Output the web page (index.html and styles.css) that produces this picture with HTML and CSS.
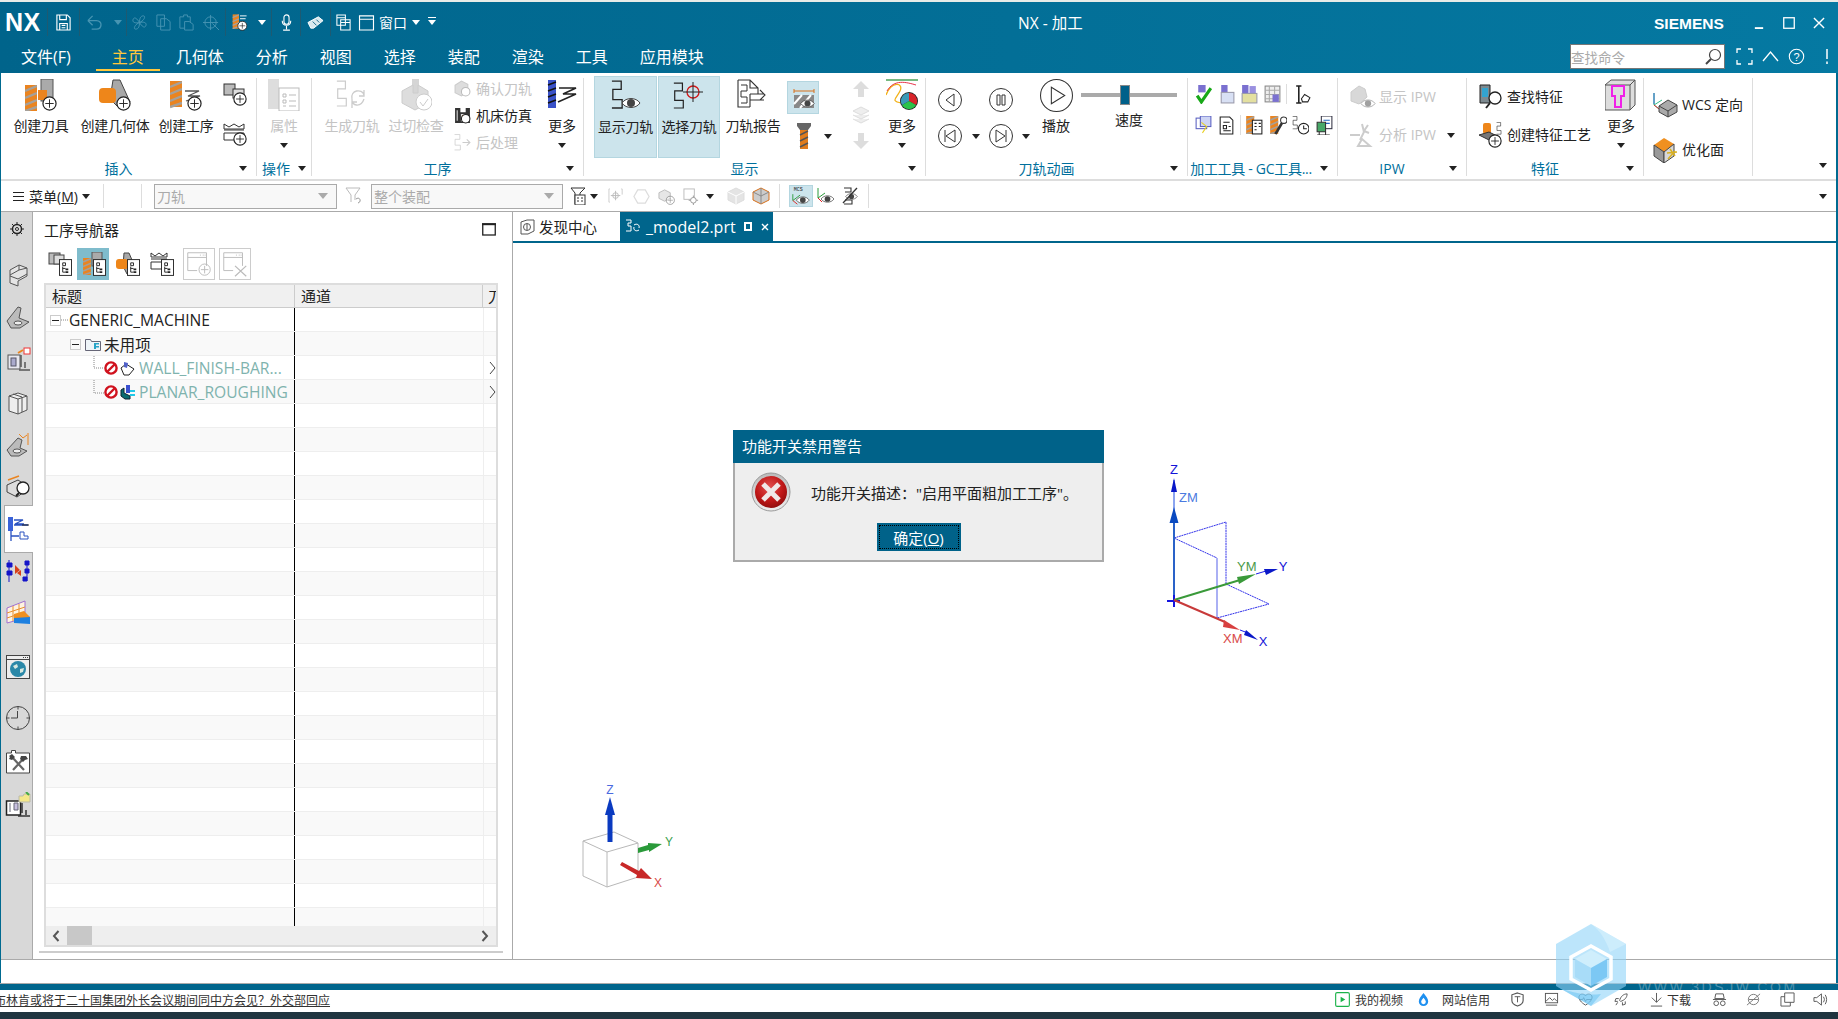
FILE: index.html
```html
<!DOCTYPE html>
<html lang="zh-CN">
<head>
<meta charset="utf-8">
<title>NX - 加工</title>
<link rel="stylesheet" href="styles.css">
</head>
<body>
<svg class="defs" aria-hidden="true">
  <defs>
    <radialGradient id="errRed" cx="45%" cy="35%" r="70%"><stop offset="0" stop-color="#e25050"/><stop offset=".6" stop-color="#c01818"/><stop offset="1" stop-color="#8a0c0c"/></radialGradient>
    <linearGradient id="silver" x1="0" y1="0" x2="0" y2="1"><stop offset="0" stop-color="#bbb"/><stop offset="1" stop-color="#eee"/></linearGradient>
  </defs>
  <symbol id="mill" viewBox="0 0 12 26"><rect width="12" height="26" fill="#ea8420"/><path d="M0 6 12 1M0 13 12 8M0 20 12 15M0 26 12 22" stroke="#a5a09a" stroke-width="2.4"/></symbol>
  <symbol id="plus" viewBox="0 0 16 16"><circle cx="8" cy="8" r="7" fill="#fff" stroke="#222" stroke-width="1.3"/><path d="M8 3.5v9M3.5 8h9" stroke="#222" fill="none"/></symbol>
  <symbol id="path" viewBox="0 0 14 32"><path d="M1 1h10v9H2v11h10v9H1" fill="none" stroke="currentColor" stroke-width="1.4"/></symbol>
  <symbol id="eye" viewBox="0 0 20 14"><path d="M1 7C5 1 15 1 19 7 15 13 5 13 1 7Z" fill="#fff" stroke="#444"/><circle cx="10" cy="7" r="4" fill="#444"/></symbol>
  <symbol id="treeb" viewBox="0 0 14 18"><rect x=".5" y=".5" width="13" height="17" fill="#fff" stroke="#222"/><path d="M4 4h3v3H4zM4 8v6M4 10h3M4 14h3" fill="none" stroke="#222"/><path d="M7 10h3v2H7zM7 13h3v2H7z" fill="#222"/></symbol>
  <symbol id="nosign" viewBox="0 0 14 14"><circle cx="7" cy="7" r="5.6" fill="#fff" stroke="#d0121e" stroke-width="2.4"/><path d="M3 11 11 3" stroke="#d0121e" stroke-width="2.4"/></symbol>
</svg>

<div class="app">
  <div class="topstrip"></div>
  <header class="titlebar">
    <div class="title-row">
      <div class="qat">
        <span class="nx">NX</span><i class="qsep"></i>
        <svg class="qi" viewBox="0 0 16 18"><path d="M1 1h11l3 3v13H1zM4 1v5h7V1M4 17v-7h8v7M6 12h4M6 14.500h4" fill="none" stroke="#fff" stroke-width="1.2"/></svg><i class="qsep"></i>
        <svg class="qi" viewBox="0 0 18 18"><path d="M2 7h9c7 0 6 9 0 9H6M2 7l5-5M2 7l5 5" fill="none" stroke="#4694b2" stroke-width="1.4"/></svg><i class="qcaret off"></i><i class="qsep"></i>
        <svg class="qi" viewBox="0 0 18 18"><path d="M9 9C4 1 2 5 2 7s3 3 7 2c5 8 7 4 7 2s-3-3-7-2Zm0 0c-5 2-7 7-4 7s4-3 4-7Zm0 0c5-2 7-7 4-7s-4 3-4 7Z" fill="none" stroke="#4694b2"/></svg>
        <svg class="qi" viewBox="0 0 16 18"><path d="M1 1h8v12H1zM5 5h6l4 3v9H5z" fill="none" stroke="#4694b2"/></svg>
        <svg class="qi" viewBox="0 0 16 18"><path d="M1 3h4V1h4v2h3v6M1 3v12h5M6 8h5l4 3v6H6z" fill="none" stroke="#4694b2"/></svg>
        <svg class="qi" viewBox="0 0 18 18"><circle cx="8" cy="9" r="6" fill="none" stroke="#4694b2"/><path d="M8 1v16M0 9h16M10 10l7 7" fill="none" stroke="#4694b2"/></svg><i class="qsep"></i>
        <svg class="qi" viewBox="0 0 17 18"><use href="#mill" x="1" y="0" width="7" height="16"/><path d="M9 2h7M9 5h6" stroke="#fff"/><use href="#plus" x="6" y="7" width="11" height="11"/></svg><i class="qcaret"></i><i class="qsep"></i>
        <svg class="qi" viewBox="0 0 12 20"><rect x="3" y="1" width="6" height="11" rx="3" fill="none" stroke="#fff" stroke-width="1.3"/><path d="M1 8c0 7 10 7 10 0M6 14v4M2 19h8" fill="none" stroke="#fff" stroke-width="1.3"/></svg><i class="qsep"></i>
        <svg class="qi" viewBox="0 0 18 14"><path d="M1 7 12 1l5 4-10 8H4z" fill="#d8e8ee" stroke="#fff"/><path d="M6 6l4 4M10 4l3 3" stroke="#1a6a8a"/></svg><i class="qsep"></i>
        <svg class="qi" viewBox="0 0 16 18"><path d="M1 1h9v11H1zM1 4h9M5 6h10v11H5zM5 9h10" fill="none" stroke="#fff" stroke-width="1.1"/></svg>
        <svg class="qi" viewBox="0 0 16 18"><path d="M.6 2h14.800v15H.6zM.6 5.500h14.800" fill="none" stroke="#fff" stroke-width="1.2"/></svg>
        <span class="qtext">窗口</span><i class="qcaret"></i><i class="qcaret lined"></i>
      </div>
      <div class="wintitle">NX - 加工</div>
      <div class="siemens">SIEMENS</div>
      <div class="winbtns">
        <svg class="wb" viewBox="0 0 13 13"><path d="M2 12h9" stroke="#fff" stroke-width="2"/></svg>
        <svg class="wb" viewBox="0 0 13 13"><rect x=".8" y=".8" width="11.400" height="11.400" fill="none" stroke="#fff" stroke-width="1.4"/></svg>
        <svg class="wb" viewBox="0 0 13 13"><path d="M1 1l11 11M12 1 1 12" stroke="#fff" stroke-width="1.5"/></svg>
      </div>
    </div>
    <div class="menu-row">
      <nav class="menu">
        <a class="m-file">文件(F)</a><a class="active">主页</a><a>几何体</a><a>分析</a><a>视图</a><a>选择</a><a>装配</a><a>渲染</a><a>工具</a><a>应用模块</a>
      </nav>
      <div class="search"><span>查找命令</span><svg viewBox="0 0 18 18"><circle cx="11" cy="7" r="5.500" fill="none" stroke="#444" stroke-width="1.200"/><path d="M7 11 2 16" stroke="#444" stroke-width="2"/></svg></div>
      <div class="menu-tools">
        <svg viewBox="0 0 17 17"><path d="M1 5V1h4M12 1h4v4M16 12v4h-4M5 16H1v-4" fill="none" stroke="#fff" stroke-width="1.300"/></svg>
        <svg viewBox="0 0 17 17"><path d="M1 13 8.500 4 16 13" fill="none" stroke="#fff" stroke-width="1.300"/></svg>
        <svg viewBox="0 0 17 17"><circle cx="8.500" cy="8.500" r="7.200" fill="none" stroke="#fff" stroke-width="1.100"/><text x="8.500" y="12.500" class="svgq">?</text></svg>
        <svg class="excl" viewBox="0 0 6 17"><path d="M3 1v10M3 13.500v2.500" stroke="#fff" stroke-width="1.500"/></svg>
      </div>
    </div>
  </header>

  <div class="work">
    <section class="ribbon">
      <div class="grp g1">
        <div class="gbody">
          <div class="big w62">
            <svg class="ico32" viewBox="0 0 32 32"><use href="#mill" x="0" y="6" width="12" height="26"/><rect x="16" y="0" width="12" height="22" fill="#aaa" stroke="#555"/><rect x="13" y="11" width="9" height="10" fill="#ea8420"/><use href="#plus" x="17" y="17" width="15" height="15"/></svg>
            <span>创建刀具</span>
          </div>
          <div class="big w86">
            <svg class="ico32" viewBox="0 0 32 32"><path d="M14 1h7l10 22-10 7L11 20z" fill="#a8a8a8" stroke="#444"/><rect x="0" y="9" width="17" height="15" rx="4" fill="#ee861a"/><use href="#plus" x="17" y="17" width="15" height="15"/></svg>
            <span>创建几何体</span>
          </div>
          <div class="big w56">
            <svg class="ico32" viewBox="0 0 32 32"><use href="#mill" x="0" y="0" width="12" height="30"/><path d="M15 12h14L18 17h12L16 22" fill="none" stroke="#555" stroke-width="1.300"/><use href="#plus" x="17" y="17" width="15" height="15"/></svg>
            <span>创建工序</span>
          </div>
          <div class="smallcol w42">
            <svg class="ico24" viewBox="0 0 24 24"><rect x="1" y="2" width="11" height="11" fill="#bbb" stroke="#333"/><rect x="10" y="7" width="11" height="9" fill="#ddd" stroke="#333"/><use href="#plus" x="10" y="10" width="14" height="14"/></svg>
            <svg class="ico24" viewBox="0 0 24 24"><path d="M1 2l5 3 5-3 5 3 5-3v5H1zM1 8h20M1 11h20v7H1z" fill="#fff" stroke="#333"/><use href="#plus" x="10" y="10" width="14" height="14"/></svg>
          </div>
        </div>
        <div class="glabel"><span>插入</span><i class="caret"></i></div>
      </div>

      <div class="grp g2">
        <div class="gbody">
          <div class="big w54 off">
            <svg class="ico32" viewBox="0 0 32 32"><rect x="0" y="0" width="11" height="30" fill="#ddd"/><rect x="11" y="9" width="20" height="23" fill="#fff" stroke="#bbb"/><path d="M15 15h3v3h-3zM21 16h7M15 21h3v3h-3zM21 22h7M15 27h3M21 27h7" fill="none" stroke="#bbb"/></svg>
            <span>属性</span><i class="caret"></i>
          </div>
        </div>
        <div class="glabel"><span>操作</span><i class="caret"></i></div>
      </div>

      <div class="grp g3">
        <div class="gbody">
          <div class="big w56 off ml12">
            <svg class="ico32" viewBox="0 0 32 32"><g color="#ccc"><use href="#path" x="0" y="0" width="12" height="30"/></g><path d="M16 20c-2-9 10-11 12-4M28 20c-3 9-13 7-12 0M28 11v6h-5M16 29v-6h5" fill="none" stroke="#ccc" stroke-width="1.300"/></svg>
            <span>生成刀轨</span>
          </div>
          <div class="big w56 off ml8">
            <svg class="ico32" viewBox="0 0 32 32"><rect x="12" y="0" width="7" height="18" fill="#d5d5d5"/><path d="M2 12 13 6v8h5V6l10 6v12l-13 7-13-7z" fill="#ddd" stroke="#ccc"/><circle cx="24" cy="23" r="8" fill="#fff" stroke="#ccc"/><path d="M20 23l3 4 5-7" fill="none" stroke="#ccc"/></svg>
            <span>过切检查</span>
          </div>
          <div class="rows ml10 r27">
            <div class="row off"><svg class="ico16" viewBox="0 0 16 16"><path d="M1 5l6-4 6 3v7l-6 4-6-3z" fill="#ddd" stroke="#ccc"/><circle cx="11" cy="11" r="4" fill="#fff" stroke="#bbb"/></svg><span>确认刀轨</span></div>
            <div class="row"><svg class="ico16" viewBox="0 0 16 16"><path d="M1 1h5v4h5V1h4v14H1z" fill="#333"/><path d="M3 3v10M7 7h4v6H7z" stroke="#ddd" fill="#ea8420"/><circle cx="11" cy="11" r="4" fill="#fff" stroke="#222"/></svg><span>机床仿真</span></div>
            <div class="row off"><svg class="ico16" viewBox="0 0 16 16"><g color="#ccc"><use href="#path" x="0" y="0" width="7" height="16"/></g><path d="M8 8h7m-3-3 3 3-3 3" fill="none" stroke="#ccc"/></svg><span>后处理</span></div>
          </div>
          <div class="big w48 ml6">
            <svg class="ico32" viewBox="0 0 32 32"><rect x="2" y="1" width="8" height="28" fill="#3a52c8"/><path d="M2 6l8-3M2 12l8-3M2 18l8-3M2 24l8-3" stroke="#111" stroke-width="1.500"/><path d="M13 9h17L17 15h13L12 23" fill="none" stroke="#222" stroke-width="1.500"/></svg>
            <span>更多</span><i class="caret"></i>
          </div>
        </div>
        <div class="glabel"><span>工序</span><i class="caret"></i></div>
      </div>

      <div class="grp g4">
        <div class="gbody">
          <div class="big toggle ml10">
            <svg class="ico32" viewBox="0 0 32 32"><g color="#222"><use href="#path" x="1" y="0" width="13" height="30"/></g><use href="#eye" x="11" y="16" width="20" height="14"/></svg>
            <span>显示刀轨</span>
          </div>
          <div class="big toggle ml1">
            <svg class="ico32" viewBox="0 0 32 32"><g color="#222"><use href="#path" x="0" y="2" width="12" height="28"/></g><circle cx="20" cy="12" r="6" fill="none" stroke="#d01818" stroke-width="1.300"/><path d="M20 2v20M10 12h20" stroke="#222"/></svg>
            <span>选择刀轨</span>
          </div>
          <div class="big w60 ml3">
            <svg class="ico32" viewBox="0 0 32 32"><path d="M1 1h12l8 8v6M13 1v8h8M1 1v27h12M13 15h14m-4-4 5 5-5 5M13 21h14M13 15v13" fill="none" stroke="#333" stroke-width="1.100"/><path d="M4 6h6v6H4v6h6v6H4" fill="none" stroke="#333"/></svg>
            <span>刀轨报告</span>
          </div>
          <div class="dcol ml4">
            <div class="dtop"><svg class="ico24" viewBox="0 0 24 24"><path d="M2 5h20M2 3v4M22 3v4" stroke="#d8701a" fill="none"/><rect x="2" y="9" width="20" height="13" fill="#888"/><path d="M2 18 10 9M8 22 19 9" stroke="#fff" stroke-width="2"/><g transform="translate(8 12)"><use href="#eye" width="15" height="11"/></g></svg></div>
            <div class="dbot"><svg class="ico26" viewBox="0 0 16 28"><path d="M1 1h14v3l-3 4H4L1 4z" fill="#666"/><rect x="4" y="8" width="8" height="19" fill="#e07c1c"/><path d="M4 13l8-4M4 19l8-4M4 25l8-4" stroke="#555" stroke-width="1.500"/></svg><i class="caret"></i></div>
          </div>
          <div class="arrows ml22">
            <svg viewBox="0 0 18 18"><path d="M9 1 17 9h-5v8H6V9H1z" fill="#ddd"/></svg>
            <svg viewBox="0 0 18 18"><path d="M1 5 9 1l8 4-8 4zM1 9l8 4 8-4M1 13l8 4 8-4" fill="#eee" stroke="#ddd"/></svg>
            <svg viewBox="0 0 18 18"><path d="M9 17 1 9h5V1h6v8h5z" fill="#ddd"/></svg>
          </div>
          <div class="big w46 ml7">
            <svg class="ico32" viewBox="0 0 32 32"><path d="M0 1h32" stroke="#1a8a2a" stroke-width="1.200"/><path d="M0 16C6 1 18 4 14 12S4 22 16 24" fill="none" stroke="#f2b21a" stroke-width="1.300"/><path d="M1 12C8 0 20 3 30 6" fill="none" stroke="#e8344a"/><circle cx="23" cy="22" r="9" fill="#222"/><path d="M23 22V14a8 8 0 0 1 7 12z" fill="#d8242a"/><path d="M23 22l7 4a8 8 0 0 1-14 0z" fill="#2ac24a"/><path d="M23 22l-7 4a8 8 0 0 1 7-12z" fill="#3a9ab8"/></svg>
            <span>更多</span><i class="caret"></i>
          </div>
        </div>
        <div class="glabel"><span>显示</span><i class="caret"></i></div>
      </div>

      <div class="grp g5">
        <div class="gbody anim">
          <svg class="circ a1" viewBox="0 0 24 24"><circle cx="12" cy="12" r="11.500" fill="none" stroke="#333"/><path d="M16 6v12L8 12z" fill="none" stroke="#333"/></svg>
          <svg class="circ a2" viewBox="0 0 24 24"><circle cx="12" cy="12" r="11.500" fill="none" stroke="#333"/><path d="M8 7h3v10H8zM13 7h3v10h-3z" fill="none" stroke="#333"/></svg>
          <div class="play">
            <svg viewBox="0 0 32 32"><circle cx="16" cy="16" r="15.500" fill="none" stroke="#333"/><path d="M11 8v16l13-8z" fill="none" stroke="#333"/></svg>
            <span>播放</span>
          </div>
          <div class="speed">
            <div class="slider"><b></b></div>
            <span>速度</span>
          </div>
          <svg class="circ a3" viewBox="0 0 24 24"><circle cx="12" cy="12" r="11.500" fill="none" stroke="#333"/><path d="M7 6v12M17 6v12L8 12z" fill="none" stroke="#333"/></svg>
          <i class="caret k1"></i>
          <svg class="circ a4" viewBox="0 0 24 24"><circle cx="12" cy="12" r="11.500" fill="none" stroke="#333"/><path d="M17 6v12M7 6v12l9-6z" fill="none" stroke="#333"/></svg>
          <i class="caret k2"></i>
        </div>
        <div class="glabel"><span>刀轨动画</span><i class="caret"></i></div>
      </div>

      <div class="grp g6">
        <div class="gbody gc">
          <div class="gcrow a">
            <svg viewBox="0 0 16 18"><rect x="3" y="0" width="7" height="7" fill="#7a70d0"/><path d="M2 10l4 6 9-13" fill="none" stroke="#18a818" stroke-width="3"/></svg>
            <svg viewBox="0 0 16 18"><rect x="3" y="0" width="6" height="7" fill="#7a70d0"/><rect x="3" y="7" width="12" height="10" fill="#d8e0f4" stroke="#99a"/></svg>
            <svg viewBox="0 0 16 18"><rect x="1" y="0" width="6" height="8" fill="#7a70d0"/><rect x="8" y="1" width="6" height="8" fill="#9a90e0"/><rect x="1" y="8" width="14" height="9" fill="#e4e0a0" stroke="#99a"/></svg>
            <svg viewBox="0 0 16 18"><rect x="1" y="1" width="14" height="15" fill="#eee" stroke="#888"/><path d="M1 5h14M1 9h14M1 13h14M5 1v15M10 1v15" stroke="#aaa"/><rect x="8" y="9" width="6" height="7" fill="#7a70d0"/></svg>
            <i class="vsep"></i>
            <svg viewBox="0 0 16 18"><path d="M2 1h5M2 17h5M4.500 1v16" stroke="#222" stroke-width="1.500" fill="none"/><path d="M7 13l3-4 5 3-2 4H8z" fill="none" stroke="#222"/></svg>
          </div>
          <div class="gcrow b">
            <svg viewBox="0 0 16 18"><rect x="1" y="2" width="10" height="10" fill="#fff" stroke="#5a60c0"/><rect x="5" y="0" width="10" height="10" fill="#cdd4f4" stroke="#5a60c0"/><path d="M6 6l5 4-4 6" stroke="#e8d020" fill="none"/></svg>
            <svg viewBox="0 0 16 18"><path d="M2 1h9l3 3v13H2z" fill="#fff" stroke="#222"/><path d="M5 6h6M5 9h3v3H5zM10 10h2M5 14h7" stroke="#222" fill="none"/></svg>
            <i class="vsep"></i>
            <svg viewBox="0 0 16 18"><use href="#mill" width="8" height="17"/><rect x="6" y="4" width="9" height="13" fill="#fff" stroke="#222"/><path d="M8 7h2M12 7h2M8 10h2M12 10h2M8 13h2" stroke="#222"/></svg>
            <svg viewBox="0 0 16 18"><use href="#mill" width="8" height="17"/><path d="M14 2 7 14l-2 3" stroke="#333" stroke-width="2.500" fill="none"/><circle cx="13" cy="4" r="3" fill="#fff" stroke="#333"/></svg>
            <svg viewBox="0 0 16 18"><g color="#222"><use href="#path" width="6" height="13"/></g><circle cx="11" cy="12" r="5" fill="#fff" stroke="#222"/><path d="M11 9v3h3" stroke="#222" fill="none"/></svg>
            <svg viewBox="0 0 16 18"><rect x="5" y="0" width="10" height="12" fill="#fff" stroke="#334"/><path d="M7 4h6M7 7h6" stroke="#2266c0"/><path d="M1 6h8v9H1z" fill="#48a868" stroke="#333"/><path d="M3 15v3M9 15v3M1 18h12" stroke="#333"/></svg>
          </div>
        </div>
        <div class="glabel"><span class="gclabel">加工工具 - GC工具...</span><i class="caret"></i></div>
      </div>

      <div class="grp g7">
        <div class="gbody ipw">
          <div class="row off"><svg class="ico26" viewBox="0 0 26 26"><path d="M1 8l8-6 6 3 2 8-8 7-8-3z" fill="#d8d8d8" stroke="#ccc"/><use href="#eye" x="10" y="14" width="16" height="11" opacity=".5"/></svg><span>显示 IPW</span></div>
          <div class="row off"><svg class="ico26" viewBox="0 0 26 26"><path d="M0 13h10M12 2l2 8-4 8M8 24l4-7 8 7zM18 3l-4 6 5 2" fill="none" stroke="#ccc" stroke-width="2"/></svg><span>分析 IPW</span><i class="caret"></i></div>
        </div>
        <div class="glabel"><span>IPW</span><i class="caret"></i></div>
      </div>

      <div class="grp g8">
        <div class="gbody fea">
          <div class="rows ft">
            <div class="row"><svg class="ico26" viewBox="0 0 26 26"><path d="M2 1h10v18H2z" fill="#7d8a90" stroke="#222"/><path d="M4 4h6v9H4z" fill="#32a4d0"/><circle cx="17" cy="14" r="6" fill="#fff" stroke="#222" stroke-width="1.300"/><path d="M12 19l-4 5" stroke="#222" stroke-width="2"/></svg><span>查找特征</span></div>
            <div class="row"><svg class="ico26" viewBox="0 0 26 26"><rect x="5" y="1" width="8" height="11" rx="2" fill="#ee861a"/><path d="M1 13l10-3 8 4-8 4z" fill="#777" stroke="#333"/><g color="#222"><use href="#path" x="18" y="0" width="6" height="13"/></g><use href="#plus" x="10" y="12" width="14" height="14"/></svg><span>创建特征工艺</span></div>
          </div>
          <div class="big w40 ml4">
            <svg class="ico32" viewBox="0 0 32 32"><path d="M0 6 6 1h24v25l-5 5H0z" fill="#ddd" stroke="#555"/><path d="M25 31V6H0M25 6l5-5" fill="none" stroke="#555"/><path d="M7 7h12v10h-3v11H10V17H7z" fill="none" stroke="#f020e8" stroke-width="2"/></svg>
            <span>更多</span><i class="caret"></i>
          </div>
        </div>
        <div class="glabel"><span>特征</span><i class="caret"></i></div>
      </div>

      <div class="grp g9">
        <div class="gbody wcs">
          <div class="row"><svg class="ico26" viewBox="0 0 26 26"><path d="M1 1v12M1 13 9 8M1 13l9 7" stroke="#3b8" fill="none"/><path d="M1 1v11" stroke="#36c"/><path d="M1 13l9 7" stroke="#d33"/><path d="M6 14l9-6 9 5v7l-9 5-9-5z" fill="#aaa" stroke="#444"/><path d="M6 14l9 5 9-6M15 19v6" fill="none" stroke="#444"/></svg><span>WCS 定向</span></div>
          <div class="row"><svg class="ico26" viewBox="0 0 26 26"><path d="M1 8l10-7 10 6-10 8z" fill="#f09020"/><path d="M1 8v11l10 7V15z" fill="#999" stroke="#444"/><path d="M11 15v11l10-7V7z" fill="#d8d8d8" stroke="#444"/><path d="M15 22l7-8M17 12l5 7M14 16l10-1" stroke="#d8b020" stroke-width="1.500"/></svg><span>优化面</span></div>
        </div>
      </div>
      <div class="ribbon-end"><i class="caret"></i></div>
    </section>

    <section class="toolbar">
      <div class="t-menu"><svg viewBox="0 0 11 11"><path d="M0 1.500h11M0 5.500h11M0 9.500h11" stroke="#222"/></svg><span>菜单(<u>M</u>)</span><i class="caret"></i></div>
      <i class="tsep s1"></i><i class="tsep s2"></i>
      <div class="combo c-a"><span>刀轨</span><i class="caret"></i></div>
      <svg class="tf f1" viewBox="0 0 18 18"><path d="M1 1h14l-5 7v5M1 1l5 7v7" fill="none" stroke="#bbb"/><path d="M11 12c4-3 6 3 2 4" fill="none" stroke="#999"/></svg>
      <div class="combo c-b"><span>整个装配</span><i class="caret"></i></div>
      <svg class="tf f2" viewBox="0 0 18 18"><path d="M1 1h14l-5 5v3M1 1l4 5v11" fill="none" stroke="#333"/><rect x="5" y="8" width="10" height="10" fill="#fff" stroke="#333"/><path d="M7 11h2M11 11h2M7 14h2M11 14h2" stroke="#333"/></svg>
      <i class="caret k-a"></i>
      <div class="t-off">
        <svg viewBox="0 0 18 18"><path d="M2 1H1v14h1M14 1h1v6" fill="none" stroke="#ccc"/><path d="M8 3v10M3 8h10" stroke="#bbb"/><circle cx="8" cy="8" r="3" fill="none" stroke="#bbb"/></svg>
        <svg viewBox="0 0 18 18"><path d="M5 2h8l4 7-4 7H5L1 9z" fill="none" stroke="#ddd" stroke-width="1.300"/></svg>
        <svg viewBox="0 0 18 18"><path d="M1 5l6-3 6 3v6l-6 3-6-3z" fill="#e6e6e6" stroke="#bbb"/><use href="#plus" x="8" y="8" width="10" height="10" opacity=".5"/></svg>
        <svg viewBox="0 0 18 18"><rect x="1" y="1" width="11" height="11" fill="none" stroke="#bbb"/><path d="M11 8v10M6 13h10" stroke="#999"/><circle cx="11" cy="13" r="3" fill="#fff" stroke="#999"/></svg>
      </div>
      <i class="caret k-b"></i>
      <svg class="tc c-1" viewBox="0 0 18 18"><path d="M1 5l8-4 8 4v8l-8 4-8-4z" fill="#e4e4e4" stroke="#ddd"/><path d="M1 5l8 4 8-4M9 9v8" fill="none" stroke="#fff"/></svg>
      <svg class="tc c-2" viewBox="0 0 18 18"><path d="M1 5l8-4 8 4v8l-8 4-8-4z" fill="#ccc" stroke="#d8701a"/><path d="M9 1v16M1 5l8 4 8-4" fill="none" stroke="#888"/></svg>
      <i class="tsep s3"></i>
      <div class="t-mcs"><svg viewBox="0 0 22 22"><text x="3" y="6" class="svgm">MCS</text><path d="M2 9v7M2 16l8-6" stroke="#2a9a3a" fill="none"/><path d="M2 16l5 4" stroke="#d22"/><use href="#eye" x="5" y="10" width="16" height="11"/></svg></div>
      <svg class="tc c-3" viewBox="0 0 18 18"><path d="M1 1v10M1 11l7-5" stroke="#2a9a3a" fill="none"/><path d="M1 11l4 4" stroke="#d22"/><use href="#eye" x="3" y="7" width="15" height="10"/></svg>
      <svg class="tc c-4" viewBox="0 0 18 18"><path d="M3 1h7v4H4M4 13h7v4H3" fill="none" stroke="#333" stroke-width="1.100"/><use href="#eye" x="4" y="5" width="13" height="9"/><path d="M2 16 16 1" stroke="#333" stroke-width="1.300"/></svg>
      <i class="tsep s4"></i>
      <i class="caret k-end"></i>
    </section>

    <section class="main">
      <aside class="rail">
        <svg class="r-gear" viewBox="0 0 14 14"><circle cx="7" cy="7" r="4.500" fill="none" stroke="#222" stroke-width="1.500"/><circle cx="7" cy="7" r="1.500" fill="#eee" stroke="#222"/><path d="M7 0v2.500M7 11.500V14M0 7h2.500M11.500 7H14M2 2l2 2M10 10l2 2M12 2l-2 2M4 10l-2 2" stroke="#222"/></svg>
        <svg viewBox="0 0 26 26"><path d="M5 8 14 3l8 3v8l-9 5v5l-8-3z" fill="#e5e5e5" stroke="#555"/><path d="M5 14l8 3 9-5M14 8 5 13M14 3v5l8-2" fill="none" stroke="#555"/></svg>
        <svg viewBox="0 0 26 26"><path d="M2 16 13 2l3 1-2 10 10 4-9 6H6z" fill="#bbb" stroke="#555"/><ellipse cx="13" cy="18" rx="4" ry="2" fill="#eee" stroke="#555"/></svg>
        <svg viewBox="0 0 26 26"><rect x="3" y="8" width="12" height="14" fill="#e8e8f0" stroke="#555"/><rect x="6" y="11" width="5" height="8" fill="#aac" stroke="#556"/><path d="M16 8v12M20 15v6M14 23h11" stroke="#555" stroke-width="1.500"/><rect x="19" y="1" width="6" height="6" fill="#fff" stroke="#e33"/><path d="M13 6l5-3" stroke="#ea8420" stroke-width="2"/></svg>
        <svg viewBox="0 0 26 26"><path d="M4 7l9-3 9 3v14l-9 4-9-3z" fill="#eee" stroke="#555"/><path d="M4 7l9 3 9-3M13 10v15M8 5l9 3v15" fill="none" stroke="#555"/></svg>
        <svg viewBox="0 0 26 26"><path d="M2 18 13 6l4 2-2 8 7 3-8 5H6z" fill="#bbb" stroke="#555"/><ellipse cx="12" cy="19" rx="4" ry="2" fill="#eee" stroke="#555"/><path d="M14 2l4 4 4-3M23 1v12" stroke="#ea8420" fill="none"/></svg>
        <svg viewBox="0 0 26 26"><path d="M2 12l11-5 6 4v8l-7 5-10-5z" fill="#ddd" stroke="#444"/><path d="M3 7l11-4" stroke="#ea8420" stroke-width="1.500"/><circle cx="18" cy="15" r="6" fill="#fff" stroke="#222" stroke-width="1.300"/><path d="M14 20l-3 3" stroke="#222" stroke-width="2"/></svg>
        <svg class="r-active" viewBox="0 0 26 26"><rect x="3" y="1" width="5" height="14" fill="#3a62d8"/><path d="M9 4h9L10 8h9M9 9h14M6 15v10M6 20h8" fill="none" stroke="#2a52c0" stroke-width="1.300"/><path d="M15 16h4v4h4v3h-8z" fill="#fff" stroke="#2a52c0"/><path d="M17 9h7" stroke="#222"/></svg>
        <svg viewBox="0 0 26 26"><path d="M4 3v22M2 6h5v4H2zM2 14h5v4H2zM22 4v20M20 4h4v4h-4zM20 12h4v4h-4zM18 20h4v4h-4z" fill="#1414c8" stroke="#1414c8"/><path d="M10 8l5 5-5 4zM16 13l-4 3 4 3z" fill="#d8401a"/></svg>
        <svg viewBox="0 0 26 26"><path d="M2 8 20 1v17L2 23z" fill="#fff4e0" stroke="#a070d0"/><path d="M2 13 20 7M2 18 20 12M8 6v15M14 4v16" stroke="#e89030"/><path d="M9 14l16 3v7l-16-1z" fill="#1e80e0"/><path d="M9 14l10-3 6 6-16 1z" fill="#f09020"/></svg>
        <svg viewBox="0 0 26 26"><rect x="1.500" y="1.500" width="23" height="23" fill="#eee" stroke="#444"/><path d="M1.500 5.500h23" stroke="#444"/><path d="M18 3.500h1M20 3.500h1M22 3.500h1" stroke="#444"/><circle cx="13" cy="15" r="8" fill="#2a88a8"/><path d="M8 12l4-2 1 3-3 2zM15 15l4-1-1 4-3 1z" fill="#d8e8e0"/></svg>
        <svg viewBox="0 0 26 26"><circle cx="13" cy="13" r="11.500" fill="none" stroke="#444"/><path d="M13 1.500v3M13 21.500v3M1.500 13h3M21.500 13h3M12.500 6v7H6" fill="none" stroke="#444"/></svg>
        <svg viewBox="0 0 26 26"><path d="M1.500 4h5V1.500h4V4h14v20h-23z" fill="#fff" stroke="#444"/><path d="M8 21l11-12M7 8l12 13" stroke="#666" stroke-width="2.200"/><path d="M16 7h5l2 3-3 1-2 2-3-3z" fill="#444"/><path d="M4 7l3-2 3 3-3 3-3-1 1-2z" fill="#444"/></svg>
        <svg viewBox="0 0 26 26"><rect x="1.500" y="9" width="14" height="14" fill="#fff" stroke="#222" stroke-width="1.500"/><path d="M5 11v9M9 11h4v7H9z" stroke="#667" fill="#c8c0e0"/><path d="M17 11v10M13 24h12M21 18v5" stroke="#333" stroke-width="1.500"/><path d="M14 4h4l1-2h6v8H14z" fill="#f4e88a" stroke="#bba"/><path d="M21 0l3 3" stroke="#4a4" stroke-width="2"/></svg>
      </aside>

      <div class="navpanel">
        <div class="nav-head">
          <span>工序导航器</span>
          <svg viewBox="0 0 14 13"><rect x=".75" y="1" width="12.500" height="11" fill="none" stroke="#222" stroke-width="1.300"/><path d="M0 1.200h14" stroke="#222" stroke-width="2"/></svg>
        </div>
        <div class="nav-tools">
          <div class="nt"><svg viewBox="0 0 24 24"><rect x="1" y="1" width="11" height="11" fill="#bbb" stroke="#444"/><rect x="6" y="3" width="10" height="9" fill="#ddd" stroke="#444"/><use href="#treeb" x="11" y="7" width="13" height="17"/></svg></div>
          <div class="nt on"><svg viewBox="0 0 24 24"><use href="#mill" x="1" y="6" width="8" height="17"/><rect x="10" y="0" width="10" height="14" fill="#aaa" stroke="#555"/><use href="#treeb" x="11" y="7" width="13" height="17"/></svg></div>
          <div class="nt"><svg viewBox="0 0 24 24"><path d="M8 1h5l6 14-8 7-4-8z" fill="#a8a8a8" stroke="#444"/><rect x="0" y="7" width="12" height="10" rx="3" fill="#ee861a"/><use href="#treeb" x="11" y="7" width="13" height="17"/></svg></div>
          <div class="nt"><svg viewBox="0 0 24 24"><path d="M1 1l4 3 4-3 4 3 4-3v4H1zM1 7h16M1 10h16v7H1z" fill="#fff" stroke="#333"/><use href="#treeb" x="11" y="7" width="13" height="17"/></svg></div>
          <div class="nt box"><svg viewBox="0 0 32 32"><path d="M4 23V4h20v14M4 9h20M17 6.500h1M20 6.500h1M22 6.500h1M4 23h10" fill="none" stroke="#bbb"/><circle cx="22" cy="22" r="6" fill="none" stroke="#bbb"/><path d="M22 18v8M18 22h8" stroke="#bbb"/></svg></div>
          <div class="nt box"><svg viewBox="0 0 32 32"><path d="M4 23V4h20v14M4 9h20M17 6.500h1M20 6.500h1M22 6.500h1M4 23h10" fill="none" stroke="#bbb"/><path d="M16 18l12 11M28 18 16 29" stroke="#bbb" stroke-width="1.300"/></svg></div>
        </div>
        <div class="grid">
          <div class="ghead"><span>标题</span><span>通道</span><span>刀</span></div>
          <div class="gbodyrows">
            <div class="tr"><div class="c1 t0"><i class="pm"></i><svg class="dash" viewBox="0 0 8 24"><path d="M0 12h8" stroke="#888" stroke-dasharray="1 1"/></svg><span>GENERIC_MACHINE</span></div><div class="c2"></div><div class="c3"></div></div>
            <div class="tr"><div class="c1 t1"><i class="pm"></i><svg class="folder" viewBox="0 0 16 14"><path d="M.5 2.500h5l1 2h9v9H.5z" fill="#eef4f8" stroke="#667"/><path d="M9 6h5v1.500H11V9h3v1.500h-3V12H9z" fill="#28a4c8"/></svg><span>未用项</span></div><div class="c2"></div><div class="c3"></div></div>
            <div class="tr"><div class="c1 t2"><svg class="dash2" viewBox="0 0 11 24"><path d="M1 0v12h10" fill="none" stroke="#888" stroke-dasharray="1 1"/></svg><svg class="s14" viewBox="0 0 14 14"><use href="#nosign"/></svg><svg class="s15" viewBox="0 0 15 15"><path d="M1 7l5-4 8 5-5 6H4z" fill="#fff" stroke="#222"/><path d="M4 1l4 1-1 5-3-1z" fill="#5060c8"/></svg><span class="dis">WALL_FINISH-BAR...</span></div><div class="c2"></div><div class="c3"><svg class="chev" viewBox="0 0 7 14"><path d="M1 1l5 6-5 6" fill="none" stroke="#444"/></svg></div></div>
            <div class="tr"><div class="c1 t2"><svg class="dash2" viewBox="0 0 11 24"><path d="M1 0v13h10" fill="none" stroke="#888" stroke-dasharray="1 1"/></svg><svg class="s14" viewBox="0 0 14 14"><use href="#nosign"/></svg><svg class="s15" viewBox="0 0 15 15"><path d="M1 5l3-2v5l6 3v3H5L1 11z" fill="#0a6a70" stroke="#123"/><path d="M6 0h4v8H6z" fill="#3a50d0"/><path d="M10 5h5v2h-5zM10 9h5v2h-5z" fill="#20c8e8"/></svg><span class="dis">PLANAR_ROUGHING</span></div><div class="c2"></div><div class="c3"><svg class="chev" viewBox="0 0 7 14"><path d="M1 1l5 6-5 6" fill="none" stroke="#444"/></svg></div></div>
            <div class="tr"><div class="c1"></div><div class="c2"></div><div class="c3"></div></div>
            <div class="tr"><div class="c1"></div><div class="c2"></div><div class="c3"></div></div>
            <div class="tr"><div class="c1"></div><div class="c2"></div><div class="c3"></div></div>
            <div class="tr"><div class="c1"></div><div class="c2"></div><div class="c3"></div></div>
            <div class="tr"><div class="c1"></div><div class="c2"></div><div class="c3"></div></div>
            <div class="tr"><div class="c1"></div><div class="c2"></div><div class="c3"></div></div>
            <div class="tr"><div class="c1"></div><div class="c2"></div><div class="c3"></div></div>
            <div class="tr"><div class="c1"></div><div class="c2"></div><div class="c3"></div></div>
            <div class="tr"><div class="c1"></div><div class="c2"></div><div class="c3"></div></div>
            <div class="tr"><div class="c1"></div><div class="c2"></div><div class="c3"></div></div>
            <div class="tr"><div class="c1"></div><div class="c2"></div><div class="c3"></div></div>
            <div class="tr"><div class="c1"></div><div class="c2"></div><div class="c3"></div></div>
            <div class="tr"><div class="c1"></div><div class="c2"></div><div class="c3"></div></div>
            <div class="tr"><div class="c1"></div><div class="c2"></div><div class="c3"></div></div>
            <div class="tr"><div class="c1"></div><div class="c2"></div><div class="c3"></div></div>
            <div class="tr"><div class="c1"></div><div class="c2"></div><div class="c3"></div></div>
            <div class="tr"><div class="c1"></div><div class="c2"></div><div class="c3"></div></div>
            <div class="tr"><div class="c1"></div><div class="c2"></div><div class="c3"></div></div>
            <div class="tr"><div class="c1"></div><div class="c2"></div><div class="c3"></div></div>
            <div class="tr"><div class="c1"></div><div class="c2"></div><div class="c3"></div></div>
            <div class="tr"><div class="c1"></div><div class="c2"></div><div class="c3"></div></div>
            <div class="tr"><div class="c1"></div><div class="c2"></div><div class="c3"></div></div>
          </div>
          <div class="hscroll">
            <svg viewBox="0 0 8 12"><path d="M6.500 1 2 6l4.500 5" fill="none" stroke="#555" stroke-width="2"/></svg>
            <b></b>
            <svg viewBox="0 0 8 12"><path d="M1.500 1 6 6l-4.500 5" fill="none" stroke="#555" stroke-width="2"/></svg>
          </div>
        </div>
        <div class="nav-foot"></div>
      </div>

      <div class="viewport">
        <div class="tabs">
          <div class="tab"><svg viewBox="0 0 16 16"><path d="M1 3l6-2h7v11l-6 3H1z" fill="#fff" stroke="#555"/><circle cx="7" cy="8" r="3.500" fill="none" stroke="#555"/><path d="M7 5v6" stroke="#555"/></svg><span>发现中心</span></div>
          <div class="tab active"><svg viewBox="0 0 16 16"><path d="M1 1h5v3H3v3h3v5H1" fill="none" stroke="#fff"/><path d="M9 6c3-2 6 0 5 3M14 11c-3 2-6 0-5-3" fill="none" stroke="#fff"/></svg><span>_model2.prt</span><svg class="tab-doc" viewBox="0 0 10 11"><path d="M1 1h8v9H1z" fill="#fff"/><path d="M3 3h4v5H3z" fill="#00658c"/></svg><svg class="tab-x" viewBox="0 0 10 10"><path d="M2 2l6 6M8 2 2 8" stroke="#fff" stroke-width="1.400"/></svg></div>
        </div>

        <svg class="triad-main" viewBox="0 0 190 210">
          <path d="M34 88 86 72v62M34 88 77 108" fill="none" stroke="#1c1ce8" stroke-dasharray="2 .6" stroke-width=".9"/>
          <path d="M77 108v60" stroke="#aab0f4" stroke-width="2"/>
          <path d="M86 134 129 154 77 168" fill="none" stroke="#1c1ce8" stroke-dasharray="2 .6" stroke-width=".9"/>
          <path d="M34 150V60" stroke="#2a62c8" stroke-width="2"/>
          <path d="M34 60V30" stroke="#1a4ae0" stroke-width="1"/>
          <path d="M34 57l-4.500 16h9z" fill="#0a4ac0"/>
          <path d="M34 28l-3 14h6z" fill="#0a18c8"/>
          <path d="M27 151h13M34 145v12" stroke="#1414e0" stroke-width="2"/>
          <path d="M34 150 100 130" stroke="#3a9a3a" stroke-width="2"/>
          <path d="M116 124 97 127l2 7z" fill="#3a9a3a"/>
          <path d="M116 124l10-3" stroke="#1c1ce8"/>
          <path d="M138 119l-14 0 2 6z" fill="#0a18c8"/>
          <path d="M34 150 85 172" stroke="#c83a3a" stroke-width="2"/>
          <path d="M100 180 84 170l-1 7z" fill="#d84040"/>
          <path d="M100 180l8 3" stroke="#1c1ce8"/>
          <path d="M118 190l-12-10-2 5z" fill="#0a18c8"/>
          <text x="34" y="24" class="tx z">Z</text>
          <text x="39" y="52" class="tx zm">ZM</text>
          <text x="97" y="121" class="tx ym">YM</text>
          <text x="143" y="121" class="tx z">Y</text>
          <text x="83" y="193" class="tx xm">XM</text>
          <text x="123" y="196" class="tx z">X</text>
        </svg>

        <svg class="triad-abs" viewBox="0 0 130 130">
          <path d="M23 71 54 62 78 73 47 82zM23 71v35l24 11V82M47 117l31-10V73" fill="#fff" stroke="#b8b8b8" stroke-width="1"/>
          <path d="M50 72V44" stroke="#0a3ac0" stroke-width="5"/>
          <path d="M50 27l-5 18h10z" fill="#0a3ac0"/>
          <path d="M78 78l10-3v-2l14 1-13 8v-2l-11 3z" fill="#2a9a3a"/>
          <path d="M62 92l17 9 2-3 11 11-16-1 1-3-17-10z" fill="#c82828"/>
          <text x="50" y="24" class="tx zl">Z</text>
          <text x="105" y="76" class="tx yl">Y</text>
          <text x="94" y="117" class="tx xl">X</text>
        </svg>
      </div>
    </section>

    <div class="blank"></div>
  </div>

  <div class="tealbar"></div>
  <footer class="news">
    <a class="headline">布林肯或将于二十国集团外长会议期间同中方会见？外交部回应</a>
    <div class="status">
      <svg viewBox="0 0 16 16"><rect x=".7" y=".7" width="14.600" height="14.600" rx="1.500" fill="none" stroke="#1cb34a" stroke-width="1.200"/><path d="M6 5l5 3-5 3z" fill="#1cb34a"/></svg>
      <span>我的视频</span>
      <svg viewBox="0 0 12 16"><path d="M6 1c3 4 5 6 5 9a5 5 0 0 1-10 0c0-3 2-5 5-9Z" fill="#1e90f0"/><path d="M6 6c1.500 2 2.500 3 2.500 4.500a2.500 2.500 0 0 1-5 0C3.500 9 4.500 8 6 6Z" fill="#fff"/></svg>
      <span>网站信用</span>
      <svg viewBox="0 0 16 16"><path d="M8 1l6 2v6c0 3-3 5-6 6-3-1-6-3-6-6V3z" fill="none" stroke="#555" stroke-width="1.200"/><path d="M5 5h6M8 5v6" stroke="#555"/></svg>
      <svg viewBox="0 0 16 16"><rect x="1.500" y="1.500" width="13" height="10" fill="none" stroke="#555"/><path d="M2 10l4-4 3 3 2-2 3 3M2 14h12" fill="none" stroke="#555"/></svg>
      <svg viewBox="0 0 16 16"><path d="M8 14C3 11 1 8 1 5.500 1 2 6 1 8 4c2-3 7-2 7 1.500C15 8 13 11 8 14Z" fill="none" stroke="#555"/><path d="M2 8h3l1-2 2 4 1-2h5" fill="none" stroke="#555"/></svg>
      <svg viewBox="0 0 16 16"><path d="M6 9c1-4 4-7 8-7 0 4-3 7-7 8zM5 7H2L1 10h3M9 11v3l3-1v-3M4 11l-2 3" fill="none" stroke="#555"/></svg>
      <svg viewBox="0 0 14 16"><path d="M7 1v10M2 6l5 5 5-5M1 15h12" fill="none" stroke="#555"/></svg>
      <span>下载</span>
      <svg viewBox="0 0 16 16"><path d="M4 2h8l1 5H3zM1 8h14" fill="none" stroke="#555"/><circle cx="4.500" cy="12" r="2.500" fill="none" stroke="#555"/><circle cx="11.500" cy="12" r="2.500" fill="none" stroke="#555"/></svg>
      <svg viewBox="0 0 16 16"><circle cx="8" cy="8" r="5.500" fill="none" stroke="#777"/><path d="M3 8h10M1 14 15 2" fill="none" stroke="#777"/></svg>
      <svg viewBox="0 0 16 16"><path d="M5 1h10v10H5zM5 5H1v10h10v-4" fill="none" stroke="#555"/></svg>
      <svg viewBox="0 0 16 16"><path d="M1 6h3l5-4v12l-5-4H1zM11 5c1.500 2 1.500 4 0 6M13 3c2 3 2 7 0 10" fill="none" stroke="#555"/></svg>
    </div>
  </footer>
  <div class="taskbar"></div>

  <div class="dialog">
    <div class="dlg-title">功能开关禁用警告</div>
    <div class="dlg-msg">
      <svg viewBox="0 0 40 40"><circle cx="20" cy="20" r="19" fill="url(#silver)" stroke="#999"/><circle cx="20" cy="20" r="16" fill="url(#errRed)"/><path d="M12 12l16 16M28 12 12 28" stroke="#f0e8e8" stroke-width="5"/></svg>
      <span>功能开关描述："启用平面粗加工工序"。</span>
    </div>
    <div class="dlg-btn"><button>确定(<u>O</u>)</button></div>
  </div>

  <svg class="wm" viewBox="0 0 70 82">
    <path d="M35 0 70 20v42L35 82 0 62V20z" fill="#8fd4f8" opacity=".6"/>
    <path d="M35 0 70 20 54 28C50 16 44 6 35 0Z" fill="#d8f2fe" opacity=".6"/>
    <path d="M0 62 35 82 45 70C28 72 12 68 0 62Z" fill="#5cbcf0" opacity=".45"/>
    <path d="M35 22 55 33v22L35 66 15 55V33z" fill="none" stroke="#fff" stroke-width="3.500"/>
    <path d="M35 26 51 35 35 44 19 35z" fill="#cfeefc"/>
    <path d="M35 44 51 35v18L35 62z" fill="#7cc8f4"/>
    <path d="M35 44 19 35v18L35 62z" fill="#a8dcf8"/>
  </svg>
  <div class="wm-text">WWW.3DSJW.COM</div>
</div>
</body>
</html>
```

FILE: styles.css
```css
* { box-sizing: border-box; }
html, body { margin: 0; padding: 0; }
body { font-family: "Open Sans", "Noto Sans CJK SC", sans-serif; font-size: 14px; color: #222; background: #fff; }
svg { display: block; flex: none; }
i { display: block; flex: none; font-style: normal; }
.defs { width: 0; height: 0; position: absolute; }

.app { position: relative; width: 1838px; height: 1019px; overflow: hidden; display: flex; flex-direction: column; }
.topstrip { height: 2px; background: #e8ece8; flex: none; }

.titlebar { height: 71px; flex: none; background: linear-gradient(90deg, #00648b 0%, #036f97 55%, #0579a2 100%); color: #fff; }
.title-row { height: 40px; display: flex; align-items: center; }
.qat { width: 1018px; flex: none; padding-left: 5px; height: 40px; display: grid; align-items: center; justify-items: center;
  grid-template-columns: 42px 1px 31px 1px 29px 17px 1px 25px 23px 23px 27px 1px 26px 19px 1px 28px 1px 29px 1px 24px 23px 30px 15px 17px; }
.nx { font: bold 25px "Liberation Sans", sans-serif; justify-self: start; letter-spacing: .5px; }
.qsep { width: 1px; height: 28px; background: #1d5a72; }
.qi { height: 17px; width: 17px; }
.qtext { font-size: 14px; line-height: 20px; padding-top: 2px; }
.qcaret { width: 0; height: 0; border: 4px solid transparent; border-top: 5px solid #fff; border-bottom: 0; }
.qcaret.off { border-top-color: #4694b2; }
.qcaret.lined { position: relative; }
.qcaret.lined::before { content: ""; position: absolute; left: -4px; top: -8px; width: 8px; height: 1px; background: #fff; }
.wintitle { font-size: 15.500px; padding-top: 1px; }
.siemens { margin-left: auto; font: bold 15.500px "Liberation Sans", sans-serif; width: 70px; padding-top: 3px; }
.winbtns { margin-left: 29px; margin-right: 13px; display: flex; gap: 18px; padding-top: 1px; }
.wb { width: 12px; height: 12px; }

.menu-row { height: 31px; display: flex; align-items: flex-start; }
.menu { display: flex; gap: 32px; padding-left: 21px; font-size: 16px; line-height: 22px; width: 1570px; flex: none; padding-top: 4px; }
.menu a { position: relative; white-space: nowrap; }
.menu .m-file { margin-right: 9px; }
.menu .active { color: #ffc83c; }
.menu .active::after { content: ""; position: absolute; left: -16px; right: -16px; top: 23px; height: 2px; background: #ffc83c; }
.search { width: 155px; height: 25px; margin-top: 2px; background: #fff; border: 1px solid #777; display: flex; align-items: center; justify-content: space-between; padding-right: 2px; color: #aaa; font-size: 13.500px; flex: none; }
.search svg { width: 18px; height: 18px; }
.menu-tools { display: flex; align-items: center; height: 25px; margin-top: 2px; padding-left: 11px; gap: 9px; }
.menu-tools svg { width: 17px; height: 17px; }
.menu-tools .excl { width: 6px; margin-left: 10px; }
.svgq { font: 11px "Liberation Sans", sans-serif; fill: #fff; text-anchor: middle; }

.work { border-left: 1px solid #006a90; border-right: 2px solid #006a90; height: 910px; flex: none; display: flex; flex-direction: column; background: #fff; }

.ribbon { height: 108px; flex: none; display: flex; padding-top: 5px; border-bottom: 2px solid #ddd; }
.grp { display: flex; flex-direction: column; height: 98px; border-right: 1px solid #ddd; flex: none; }
.gbody { height: 82px; display: flex; align-items: flex-start; flex: none; }
.glabel { height: 16px; display: flex; align-items: center; color: #006f9c; font-size: 14px; line-height: 20px; }
.glabel span { flex: 1; text-align: center; white-space: nowrap; padding: 2px 0 0 5px; }
.glabel .caret { margin: 0 9px 0 8px; }
.caret { width: 0; height: 0; border: 4px solid transparent; border-top: 5px solid #222; border-bottom: 0; }
.g1 { width: 256px; } .g2 { width: 55px; } .g3 { width: 272px; } .g4 { width: 342px; } .g5 { width: 262px; } .g6 { width: 150px; } .g7 { width: 129px; } .g8 { width: 177px; } .g9 { width: 109px; }
.g1 .gbody { padding-left: 9px; }
.ribbon-end { flex: 1; display: flex; justify-content: flex-end; align-items: flex-end; padding: 0 9px 11px 0; }

.big { display: flex; flex-direction: column; align-items: center; padding-top: 1px; flex: none; line-height: 20px; white-space: nowrap; }
.big span { margin-top: 5px; font-size: 14px; letter-spacing: -.2px; }
.big .caret { margin-top: 7px; }
.ico32 { width: 32px; height: 32px; }
.ico24 { width: 24px; height: 24px; }
.ico26 { width: 26px; height: 26px; }
.ico16 { width: 17px; height: 17px; }
.off { color: #c4c4c4; }
.w62 { width: 62px; } .w86 { width: 86px; } .w56 { width: 56px; } .w42 { width: 42px; } .w54 { width: 54px; } .w48 { width: 48px; } .w60 { width: 60px; } .w46 { width: 46px; } .w40 { width: 40px; }
.ml1 { margin-left: 1px; } .ml3 { margin-left: 3px; } .ml4 { margin-left: 4px; } .ml6 { margin-left: 6px; } .ml7 { margin-left: 7px; } .ml8 { margin-left: 8px; } .ml10 { margin-left: 10px; } .ml12 { margin-left: 12px; } .ml22 { margin-left: 22px; }
.smallcol { display: flex; flex-direction: column; align-items: center; gap: 16px; padding-top: 4px; }
.rows { display: flex; flex-direction: column; }
.r27 { margin-top: -3px; }
.r27 .row { height: 27px; }
.row { display: flex; align-items: center; gap: 5px; white-space: nowrap; line-height: 20px; }

.toggle { width: 63px; height: 82px; margin-top: -2px; padding-top: 3px; background: #cce4ec; border: 1px solid #b4d6e0; }
.toggle + .toggle { width: 62px; }
.dcol { width: 40px; display: flex; flex-direction: column; }
.dtop { width: 32px; height: 33px; padding: 4px; background: #cce4ec; border: 1px solid #b4d6e0; margin-top: 3px; }
.dbot { display: flex; align-items: center; gap: 10px; padding: 8px 0 0 7px; }
.dbot .ico26 { width: 20px; height: 28px; }
.arrows { width: 24px; display: flex; flex-direction: column; align-items: center; gap: 8px; padding-top: 2px; }
.arrows svg { width: 18px; height: 18px; }

.anim { display: grid; grid-template-columns: 12px 24px 27px 24px 26px 34px 104px; grid-template-rows: 37px 42px; align-items: center; justify-items: center; }
.circ { width: 24px; height: 24px; }
.a1 { grid-column: 2; grid-row: 1; margin-top: 6px; } .a2 { grid-column: 4; grid-row: 1; margin-top: 6px; }
.a3 { grid-column: 2; grid-row: 2; } .a4 { grid-column: 4; grid-row: 2; }
.k1 { grid-column: 3; grid-row: 2; } .k2 { grid-column: 5; grid-row: 2; }
.play { grid-column: 6; grid-row: 1 / 3; align-self: start; display: flex; flex-direction: column; align-items: center; }
.play svg { width: 33px; height: 33px; margin-top: 1px; }
.play span { margin-top: 4px; line-height: 20px; white-space: nowrap; }
.speed { grid-column: 7; grid-row: 1 / 3; align-self: start; justify-self: start; display: flex; flex-direction: column; align-items: center; width: 96px; margin-left: 8px; }
.slider { width: 96px; height: 4px; background: #aaa; margin-top: 15px; position: relative; }
.slider b { position: absolute; left: 39px; top: -8px; width: 10px; height: 20px; background: #00608a; border: 1px solid #888; }
.speed span { margin-top: 13px; line-height: 20px; }

.gc { flex-direction: column; padding-top: 6px; }
.gcrow { display: grid; align-items: center; justify-items: center; height: 20px; }
.gcrow svg { width: 17px; height: 19px; }
.gcrow.a { grid-template-columns: 7px 17px 6px 17px 6px 17px 6px 17px 5px 1px 7px 17px; margin-bottom: 11px; }
.gcrow.a > :nth-child(1) { grid-column: 2; } .gcrow.a > :nth-child(2) { grid-column: 4; } .gcrow.a > :nth-child(3) { grid-column: 6; } .gcrow.a > :nth-child(4) { grid-column: 8; } .gcrow.a > :nth-child(5) { grid-column: 10; } .gcrow.a > :nth-child(6) { grid-column: 12; }
.gcrow.b { grid-template-columns: 7px 17px 6px 17px 5px 1px 5px 17px 7px 17px 5px 17px 7px 17px; }
.gcrow.b > :nth-child(1) { grid-column: 2; } .gcrow.b > :nth-child(2) { grid-column: 4; } .gcrow.b > :nth-child(3) { grid-column: 6; } .gcrow.b > :nth-child(4) { grid-column: 8; } .gcrow.b > :nth-child(5) { grid-column: 10; } .gcrow.b > :nth-child(6) { grid-column: 12; } .gcrow.b > :nth-child(7) { grid-column: 14; }
.vsep { width: 1px; height: 20px; background: #ddd; }
.g6 .glabel span { font-size: 14px; letter-spacing: -.3px; padding-left: 0; }
.g6 .glabel .caret { margin: 0 9px 0 6px; }

.ipw { flex-direction: column; padding: 6px 0 0 12px; gap: 12px; }
.ipw .row { height: 26px; gap: 3px; }
.ipw .caret { margin-left: 8px; }
.ft { padding: 6px 0 0 11px; gap: 12px; width: 130px; }
.ft .row { height: 26px; gap: 3px; }
.wcs { flex-direction: column; padding: 14px 0 0 9px; gap: 19px; }
.wcs .row { height: 26px; gap: 3px; }

.toolbar { height: 31px; flex: none; border-bottom: 1px solid #aaa; display: flex; align-items: center; padding-left: 12px; }
.t-menu { display: flex; align-items: center; gap: 4px; width: 78px; flex: none; }
.t-menu svg { width: 11px; height: 11px; }
.t-menu span { white-space: nowrap; margin-left: 1px; }
.tsep { width: 1px; height: 24px; background: #ddd; }
.s1 { margin-left: 12px; } .s2 { margin-left: 37px; }
.combo { height: 25px; border: 1px solid #aaa; background: #f8f8f8; color: #aaa; display: flex; align-items: center; justify-content: space-between; padding: 0 8px 0 2px; }
.combo .caret { border-top: 6px solid #aaa; border-left-width: 5px; border-right-width: 5px; }
.c-a { width: 183px; margin-left: 12px; } .c-b { width: 192px; margin-left: 8px; }
.tf { width: 18px; height: 18px; }
.f1 { margin-left: 8px; } .f2 { margin-left: 7px; }
.k-a { margin-left: 2px; }
.t-off { display: flex; gap: 8px; margin-left: 10px; }
.t-off svg { width: 17px; height: 17px; }
.k-b { margin-left: 6px; }
.tc { width: 18px; height: 18px; }
.c-1 { margin-left: 13px; } .c-2 { margin-left: 7px; }
.s3 { margin-left: 9px; }
.t-mcs { margin-left: 9px; width: 24px; height: 22px; background: #cce4ec; border: 1px solid #b4d6e0; }
.t-mcs svg { width: 22px; height: 20px; }
.svgm { font: 5.500px "Liberation Mono", monospace; fill: #222; }
.c-3 { margin-left: 4px; } .c-4 { margin-left: 6px; }
.s4 { margin-left: 9px; }
.k-end { margin-left: auto; margin-right: 9px; }

.main { height: 747px; flex: none; display: flex; }
.rail { width: 32px; flex: none; background: #d8d8d8; border-right: 1px solid #aaa; position: relative; display: grid; justify-items: center; align-content: start; padding: 2px 0 0 2px;
  grid-template-rows: 48px 43px 42px 42px 43px 41px 43px 41px 43px 54px 51px 44px 43px 40px; }
.rail svg { width: 26px; height: 26px; position: relative; }
.rail .r-gear { width: 14px; height: 14px; margin: 8px 2px 0 0; }
.r-active { z-index: 1; }
.rail::after { content: ""; position: absolute; left: 3px; right: -1px; top: 293px; height: 46px; background: #fff; border: 1px solid #aaa; border-right: 0; }

.navpanel { width: 480px; flex: none; border-right: 1px solid #aaa; display: flex; flex-direction: column; padding-left: 11px; }
.nav-head { height: 36px; display: flex; align-items: center; justify-content: space-between; padding-right: 16px; font-size: 15px; flex: none; padding-bottom: 2px; }
.nav-head svg { width: 14px; height: 13px; }
.nav-tools { display: flex; height: 35px; flex: none; margin-left: -1px; align-items: flex-start; }
.nt { width: 34px; height: 32px; padding: 4px 5px; flex: none; }
.nt svg { width: 24px; height: 24px; }
.nt.on { background: #7fbccc; width: 32px; margin-right: 2px; }
.nt.box { border: 1px solid #ccc; width: 32px; padding: 0; margin-left: 4px; }
.nt.box svg { width: 30px; height: 30px; }
.grid { width: 454px; height: 664px; border: 2px solid #ddd; flex: none; display: flex; flex-direction: column; overflow: hidden; }
.ghead { height: 23px; flex: none; display: grid; grid-template-columns: 249px 188px 13px; background: #f0f0f0; border-bottom: 1px solid #ccc; line-height: 22px; overflow: hidden; font-size: 15px; }
.ghead span { padding-left: 6px; border-right: 1px solid #ccc; white-space: nowrap; overflow: hidden; }
.ghead span:nth-child(3) { padding-left: 5px; border: 0; }
.gbodyrows { height: 618px; flex: none; overflow: hidden; }
.tr { height: 24px; display: grid; grid-template-columns: 249px 188px 13px; border-bottom: 1px solid #eee; }
.tr:nth-child(even) { background: #f9f9f9; }
.c1 { border-right: 1px solid #000; display: flex; align-items: center; overflow: hidden; white-space: nowrap; font-size: 15.600px; padding-top: 1px; }
.c3 { border-left: 1px solid #eee; display: flex; align-items: center; justify-content: flex-end; }
.chev { width: 7px; height: 14px; }
.pm { width: 11px; height: 11px; border: 1px solid #ccc; background: linear-gradient(#222, #222) center / 7px 1px no-repeat; }
.t0 { padding-left: 4px; }
.dash { width: 8px; height: 24px; }
.t1 { padding-left: 24px; }
.folder { width: 16px; height: 14px; margin: 0 3px 0 4px; }
.t2 { padding-left: 47px; }
.dash2 { width: 11px; height: 24px; }
.s14 { width: 14px; height: 14px; }
.s15 { width: 15px; height: 15px; margin: 0 4px 0 2px; }
.dis { color: #7fb3ae; }
.hscroll { height: 19px; flex: none; background: #eee; display: flex; align-items: center; padding: 0 7px 0 6px; }
.hscroll svg { width: 8px; height: 12px; }
.hscroll b { width: 25px; height: 19px; background: #c8c8c8; margin-left: 7px; margin-right: auto; }
.nav-foot { margin: 4px 9px 0 -5px; height: 2px; background: #ccc; }

.viewport { flex: 1; position: relative; }
.tabs { height: 31px; display: flex; border-bottom: 2px solid #00658c; padding-left: 7px; }
.tab { display: flex; align-items: center; gap: 3px; width: 100px; height: 29px; white-space: nowrap; font-size: 14.500px; }
.tab svg { width: 16px; height: 16px; }
.tab.active { background: #00658c; color: #fff; width: 153px; padding-left: 5px; font-size: 16px; gap: 5px; }
.tab .tab-doc { width: 10px; height: 11px; margin-left: 2px; }
.tab .tab-x { width: 10px; height: 10px; margin-left: 2px; }
.triad-main { position: absolute; left: 627px; top: 238px; width: 190px; height: 210px; }
.triad-abs { position: absolute; left: 47px; top: 558px; width: 130px; height: 130px; }
.tx { font: 13px "Liberation Sans", sans-serif; text-anchor: start; }
.tx.z { fill: #1414d8; text-anchor: middle; }
.tx.zm { fill: #4a7ae0; }
.tx.ym { fill: #4a9a4a; }
.tx.xm { fill: #d84848; }
.tx.zl { fill: #4a6ae0; text-anchor: middle; font-size: 12px; }
.tx.yl { fill: #3aa04a; font-size: 12px; }
.tx.xl { fill: #d84848; font-size: 12px; }

.blank { flex: 1; border-top: 1px solid #aaa; }

.tealbar { height: 7px; flex: none; background: #00658c; border-top: 1px solid #aaa; }
.news { height: 22px; flex: none; display: flex; align-items: center; padding-bottom: 3px; font-size: 12px; position: relative; overflow: hidden; background: #fff; color: #333; }
.headline { text-decoration: underline; white-space: nowrap; margin-left: -6px; font-size: 12px; }
.status { margin-left: auto; width: 503px; flex: none; display: grid; align-items: center; justify-items: start;
  grid-template-columns: 20px 61px 26px 68px 34px 34px 36px 35px 18px 45px 34px 34px 33px 16px; }
.status svg { width: 15px; height: 15px; }
.status span { white-space: nowrap; }
.taskbar { flex: 1; background: #1f3540; }

.dialog { position: absolute; left: 733px; top: 430px; width: 371px; height: 132px; background: #eee; border: 2px solid #aaa; border-top: 0; display: flex; flex-direction: column; }
.dlg-title { height: 33px; margin: 0 -2px; background: #006289; color: #fff; font-size: 15px; line-height: 33px; padding-left: 9px; flex: none; }
.dlg-msg { height: 60px; display: flex; align-items: center; flex: none; padding: 0 0 2px 16px; }
.dlg-msg svg { width: 40px; height: 40px; }
.dlg-msg span { margin-left: 20px; font-size: 15px; white-space: nowrap; }
.dlg-btn { display: flex; justify-content: center; }
.dlg-btn button { width: 84px; height: 28px; border: 0; padding: 0; background: #006289; color: #fff; font-family: inherit; font-size: 15px; outline: 1px dotted #000; outline-offset: -3px; }

.wm { position: absolute; left: 1556px; top: 924px; width: 70px; height: 82px; }
.wm-text { position: absolute; left: 1638px; top: 979px; color: rgba(255,255,255,.3); font: 14px "Liberation Sans", sans-serif; letter-spacing: 2.600px; white-space: nowrap; }
```
